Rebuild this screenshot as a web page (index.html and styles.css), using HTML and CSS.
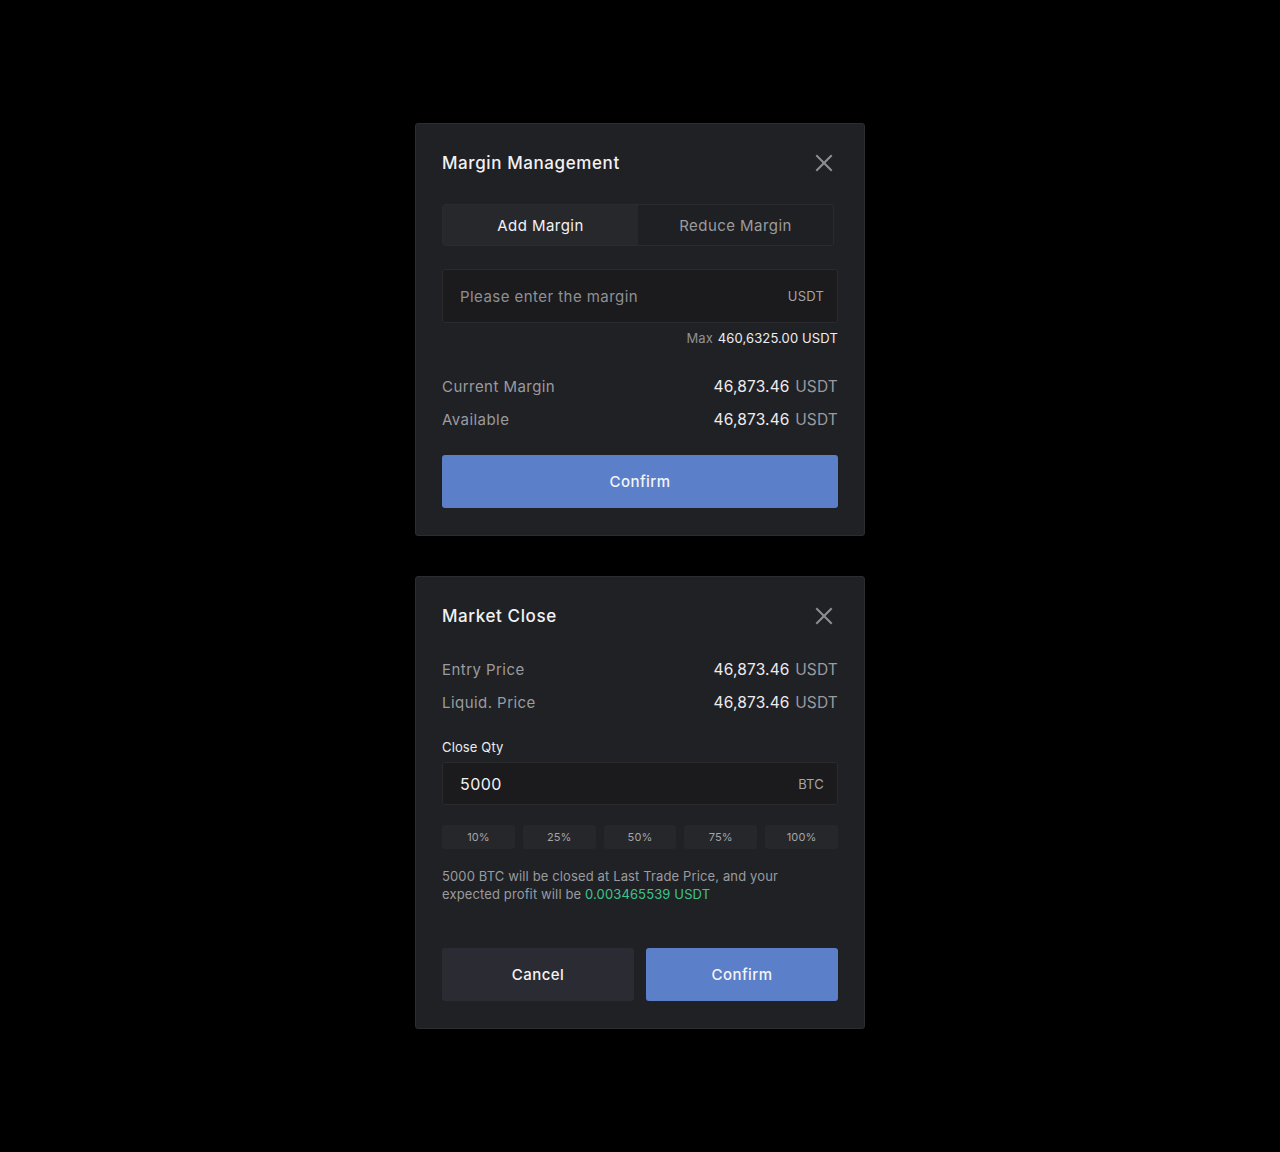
FILE: index.html
```html
<!DOCTYPE html>
<html lang="en">
<head>
<meta charset="utf-8">
<title>Margin Management</title>
<link rel="stylesheet" href="styles.css">
</head>
<body>
<main class="stack">
  <section class="modal">
    <header class="modal-head">
      <h2 class="modal-title">Margin Management</h2>
      <button class="close" aria-label="Close">
        <svg width="18" height="18" viewBox="0 0 18 18"><path d="M2 2L16 16M16 2L2 16" stroke="currentColor" stroke-width="2" stroke-linecap="square"/></svg>
      </button>
    </header>
    <div class="tabs">
      <div class="tab active">Add Margin</div>
      <div class="tab">Reduce Margin</div>
    </div>
    <div class="field tall">
      <span class="placeholder">Please enter the margin</span>
      <span class="unit">USDT</span>
    </div>
    <div class="max"><span class="muted">Max</span> <span class="max-val">460,6325.00 USDT</span></div>
    <div class="rows">
      <div class="row"><span class="label">Current Margin</span><span class="val">46,873.46 <span class="cur">USDT</span></span></div>
      <div class="row"><span class="label">Available</span><span class="val">46,873.46 <span class="cur">USDT</span></span></div>
    </div>
    <button class="btn primary full">Confirm</button>
  </section>

  <section class="modal">
    <header class="modal-head">
      <h2 class="modal-title">Market Close</h2>
      <button class="close" aria-label="Close">
        <svg width="18" height="18" viewBox="0 0 18 18"><path d="M2 2L16 16M16 2L2 16" stroke="currentColor" stroke-width="2" stroke-linecap="square"/></svg>
      </button>
    </header>
    <div class="rows">
      <div class="row"><span class="label">Entry Price</span><span class="val">46,873.46 <span class="cur">USDT</span></span></div>
      <div class="row"><span class="label">Liquid. Price</span><span class="val">46,873.46 <span class="cur">USDT</span></span></div>
    </div>
    <div class="field-label">Close Qty</div>
    <div class="field short">
      <span class="value">5000</span>
      <span class="unit">BTC</span>
    </div>
    <div class="pcts">
      <button class="pct">10%</button>
      <button class="pct">25%</button>
      <button class="pct">50%</button>
      <button class="pct">75%</button>
      <button class="pct">100%</button>
    </div>
    <p class="note">5000 BTC will be closed at Last Trade Price, and your expected profit will be <span class="green">0.003465539 USDT</span></p>
    <div class="actions">
      <button class="btn secondary">Cancel</button>
      <button class="btn primary">Confirm</button>
    </div>
  </section>
</main>
</body>
</html>
```

FILE: styles.css
```css
* { box-sizing: border-box; }
html, body { margin: 0; padding: 0; }
body {
  background: #000;
  font-family: Inter, "Noto Sans", sans-serif;
  color: #ececee;
  min-height: 1152px;
  letter-spacing: 0.028em;
}
button { letter-spacing: inherit; }
.stack {
  display: flex;
  flex-direction: column;
  align-items: center;
  gap: 40px;
  padding-top: 123px;
}
.modal {
  width: 450px;
  background: #202125;
  border: 1px solid #2c2d31;
  border-radius: 3px;
  padding: 26px 26px 27px 26px;
  display: flex;
  flex-direction: column;
}
.modal-head {
  display: flex;
  align-items: center;
  justify-content: space-between;
  height: 26px;
}
.modal-title {
  margin: 0;
  font-size: 17px;
  line-height: 28px;
  font-weight: 500;
  color: #f2f2f4;
  letter-spacing: 0.035em;
}
.close {
  background: none;
  border: 0;
  padding: 0;
  width: 18px;
  height: 18px;
  color: #8e8f93;
  display: flex;
  margin-right: 5px;
}
.tabs {
  margin-top: 28px;
  width: 392px;
  height: 42px;
  display: flex;
  background: #1f2023;
  border: 1px solid #2a2b2f;
  border-radius: 3px;
  overflow: hidden;
}
.tab {
  flex: 1;
  display: flex;
  align-items: center;
  justify-content: center;
  font-size: 15px;
  color: #9a9b9f;
}
.tab.active {
  background: #27282c;
  color: #f2f2f4;
}
.field {
  display: flex;
  align-items: center;
  justify-content: space-between;
  background: #1b1b1d;
  border: 1px solid #2a2b2f;
  border-radius: 3px;
  padding: 0 13px 0 17px;
}
.field.tall { margin-top: 23px; height: 54px; }
.field.short { margin-top: 7px; height: 43px; }
.placeholder { font-size: 15px; color: #8f9094; }
.value { font-size: 16px; color: #f2f2f4; }
.unit { font-size: 13px; color: #a4a5a9; letter-spacing: 0.015em; }
.max {
  margin-top: 7px;
  font-size: 13px;
  line-height: 16px;
  text-align: right;
  letter-spacing: 0.01em;
}
.muted { color: #8f9094; }
.max-val { color: #eeeef0; margin-left: 1px; }
.rows {
  margin-top: 29px;
  display: flex;
  flex-direction: column;
  gap: 11px;
}
.row {
  display: flex;
  justify-content: space-between;
  align-items: center;
  height: 22px;
  font-size: 15px;
}
.label { color: #9a9b9f; }
.val { color: #ececee; font-size: 15.5px; letter-spacing: 0.01em; }
.cur { color: #9a9b9f; margin-left: 1px; }
.btn {
  height: 53px;
  border: 0;
  border-radius: 3px;
  font-family: inherit;
  font-size: 15px;
  font-weight: 500;
  color: #f4f4f6;
}
.btn.primary { background: #5b7fc8; }
.btn.secondary { background: #2b2c33; }
.btn.full { margin-top: 25px; width: 100%; }
.field-label {
  margin-top: 26px;
  font-size: 13px;
  line-height: 16px;
  color: #ececee;
  letter-spacing: 0.01em;
}
.pcts {
  margin-top: 20px;
  display: flex;
  gap: 8px;
}
.pct {
  flex: 1;
  height: 24px;
  border: 0;
  border-radius: 3px;
  background: #26272b;
  color: #a4a5a9;
  font-family: inherit;
  font-size: 11px;
  letter-spacing: 0.01em;
}
.note {
  margin: 18px 0 0;
  font-size: 13px;
  line-height: 18px;
  color: #9a9b9f;
  max-width: 350px;
  letter-spacing: 0.01em;
}
.green { color: #3ec48a; }
.actions {
  margin-top: 45px;
  display: grid;
  grid-template-columns: 1fr 1fr;
  gap: 12px;
}
```
